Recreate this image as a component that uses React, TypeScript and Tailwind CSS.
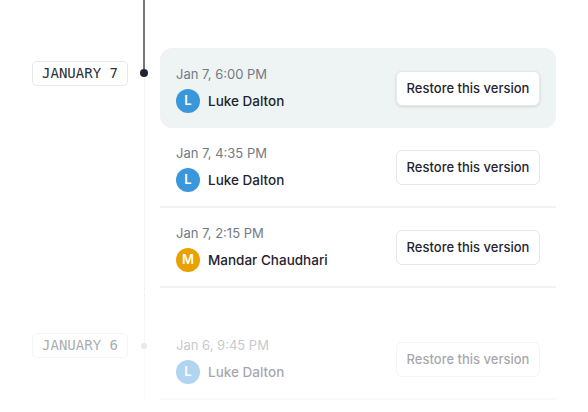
const font = { fontFamily: 'Inter, "Noto Sans", sans-serif' }

interface Version {
  time: string
  name: string
  initial: string
  color: string
  current?: boolean
}

const jan7: Version[] = [
  { time: 'Jan 7, 6:00 PM', name: 'Luke Dalton', initial: 'L', color: 'bg-[#3b97dc]', current: true },
  { time: 'Jan 7, 4:35 PM', name: 'Luke Dalton', initial: 'L', color: 'bg-[#3b97dc]' },
  { time: 'Jan 7, 2:15 PM', name: 'Mandar Chaudhari', initial: 'M', color: 'bg-[#e9a100]' },
]

const jan6: Version[] = [{ time: 'Jan 6, 9:45 PM', name: 'Luke Dalton', initial: 'L', color: 'bg-[#3b97dc]' }]

function Row({ v }: { v: Version }) {
  return (
    <div
      className={
        'flex h-20 items-center justify-between pl-4 pr-4 ' +
        (v.current ? 'rounded-xl bg-[#eef3f3]' : 'border-b-2 border-[#f1f2f3]')
      }
    >
      <div className="flex flex-col gap-[6px] pt-[2px]">
        <span className="text-[13px] leading-[18px] text-[#737a85]">{v.time}</span>
        <div className="flex items-center gap-2">
          <span className={'flex h-6 w-6 items-center justify-center rounded-full text-[13px] font-semibold text-white ' + v.color}>
            {v.initial}
          </span>
          <span className="text-[13.5px] font-medium text-[#1f2430]">{v.name}</span>
        </div>
      </div>
      <button
        className={
          'mt-[1px] h-[35px] w-[144px] rounded-md border border-[#e4e7eb] bg-white text-[13px] font-medium text-[#1f2430] ' +
          (v.current ? 'shadow-[0_1px_3px_rgba(0,0,0,0.12)]' : '')
        }
      >
        Restore this version
      </button>
    </div>
  )
}

function DateLabel({ text }: { text: string }) {
  return (
    <div
      className="mt-[13px] flex h-[25px] w-[96px] items-center justify-center rounded-[5px] border border-[#e5e7eb] text-[14px] text-[#2a2f38]"
      style={{ fontFamily: '"DejaVu Sans Mono", "Liberation Mono", monospace' }}
    >
      {text}
    </div>
  )
}

function Dotted() {
  return <div className="w-0 flex-1 border-l-[1.5px] border-dotted border-[#e9ebee]" />
}

export default function App() {
  return (
    <div className="h-[412px] w-[588px] overflow-hidden bg-white pl-8 pr-8" style={font}>
      <div className="flex h-12">
        <div className="w-[96px]" />
        <div className="flex w-8 justify-center">
          <div className="h-full w-[1.5px] bg-[#74777c]" />
        </div>
      </div>

      <div className="flex">
        <div className="w-[96px]">
          <DateLabel text="JANUARY 7" />
        </div>
        <div className="flex w-8 flex-col items-center">
          <div className="h-[21px] w-[1.5px] bg-[#74777c]" />
          <div className="h-2 w-2 rounded-full bg-[#1e2530]" />
          <Dotted />
        </div>
        <div className="flex-1">
          {jan7.map((v, i) => (
            <Row key={i} v={v} />
          ))}
        </div>
      </div>

      <div className="flex h-8">
        <div className="w-[96px]" />
        <div className="flex w-8 flex-col items-center">
          <Dotted />
        </div>
      </div>

      <div className="flex opacity-40">
        <div className="w-[96px]">
          <DateLabel text="JANUARY 6" />
        </div>
        <div className="flex w-8 flex-col items-center">
          <div className="h-[23px] w-0 border-l-[1.5px] border-dotted border-[#d5d8dc]" />
          <div className="h-[6px] w-[6px] rounded-full bg-[#c9ccd1]" />
          <Dotted />
        </div>
        <div className="flex-1">
          {jan6.map((v, i) => (
            <Row key={i} v={v} />
          ))}
        </div>
      </div>
    </div>
  )
}
